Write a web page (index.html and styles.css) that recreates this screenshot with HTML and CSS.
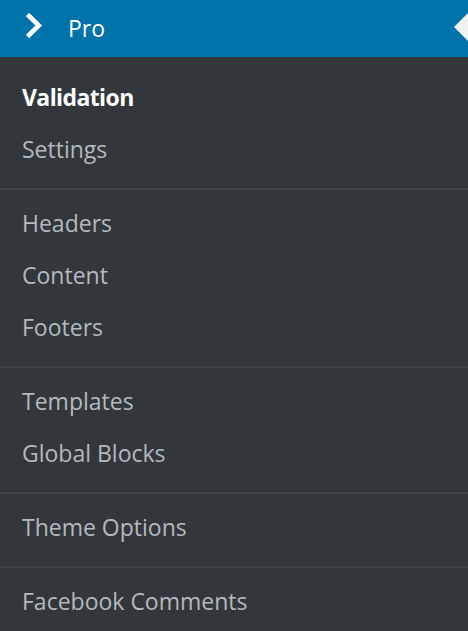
FILE: index.html
```html
<!DOCTYPE html>
<html>
<head>
<meta charset="utf-8">
<link rel="stylesheet" href="styles.css">
</head>
<body>
<nav class="menu">
  <div class="head">
    <svg class="chev" width="20" height="30" viewBox="0 0 20 30"><polyline points="3.5,2.5 14.8,13.5 3.5,24.5" fill="none" stroke="#fff" stroke-width="4.6" stroke-linecap="butt" stroke-linejoin="miter"/></svg>
    <span class="title">Pro</span>
    <span class="pointer"></span>
  </div>
  <ul class="group first">
    <li class="current">Validation</li>
    <li>Settings</li>
  </ul>
  <ul class="group">
    <li>Headers</li>
    <li>Content</li>
    <li>Footers</li>
  </ul>
  <ul class="group">
    <li>Templates</li>
    <li>Global Blocks</li>
  </ul>
  <ul class="group">
    <li>Theme Options</li>
  </ul>
  <ul class="group last">
    <li>Facebook Comments</li>
  </ul>
</nav>
</body>
</html>
```
FILE: styles.css
```css
html, body {
  margin: 0;
  padding: 0;
  background: #32373c;
}
body {
  width: 468px;
  height: 631px;
  overflow: hidden;
  font-family: "Open Sans", "Noto Sans", sans-serif;
}
.menu {
  display: flex;
  flex-direction: column;
}
.head {
  height: 57px;
  background: #0073aa;
  display: flex;
  align-items: center;
  color: #fff;
}
.chev {
  margin-left: 24px;
  margin-top: -3px;
  display: block;
}
.title {
  margin-left: 24px;
  font-size: 23px;
  margin-top: -2px;
}
.pointer {
  margin-left: auto;
  width: 0;
  height: 0;
  border-top: 14px solid transparent;
  border-bottom: 14px solid transparent;
  border-right: 14px solid #f1f1f1;
  margin-top: -3px;
}
.group {
  list-style: none;
  margin: 0;
  padding: 7px 0 13px;
  border-bottom: 2px solid #3e4449;
}
.group.first {
  padding-top: 14px;
}
.group.last {
  border-bottom: none;
}
.group li {
  height: 52px;
  line-height: 52px;
  padding-left: 22px;
  font-size: 23px;
  color: #b4b9be;
}
.group li.current {
  color: #fff;
  font-weight: 700;
  letter-spacing: -0.6px;
}
```
